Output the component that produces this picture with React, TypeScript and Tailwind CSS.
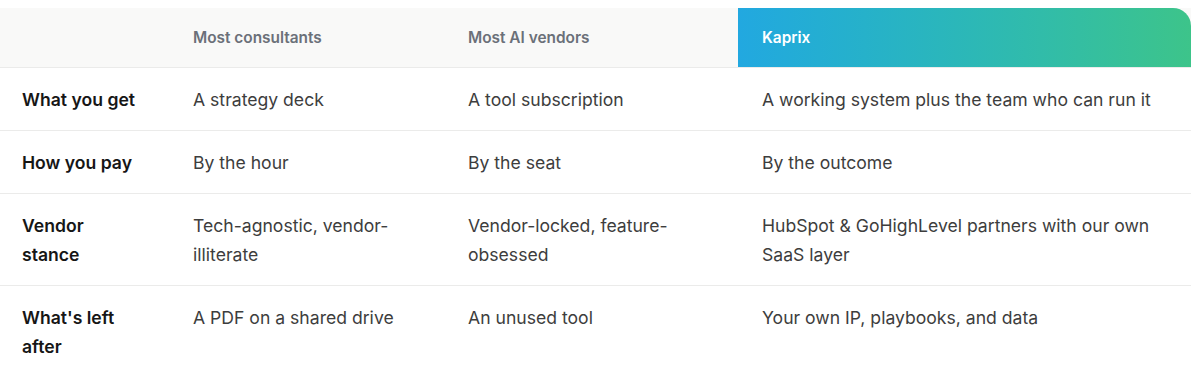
const columns = ["Most consultants", "Most AI vendors"];

const rows = [
  {
    label: "What you get",
    consultants: "A strategy deck",
    vendors: "A tool subscription",
    kaprix: "A working system plus the team who can run it",
  },
  {
    label: "How you pay",
    consultants: "By the hour",
    vendors: "By the seat",
    kaprix: "By the outcome",
  },
  {
    label: "Vendor stance",
    consultants: "Tech-agnostic, vendor-illiterate",
    vendors: "Vendor-locked, feature-obsessed",
    kaprix: "HubSpot & GoHighLevel partners with our own SaaS layer",
  },
  {
    label: "What's left after",
    consultants: "A PDF on a shared drive",
    vendors: "An unused tool",
    kaprix: "Your own IP, playbooks, and data",
  },
];

const grid = "grid grid-cols-[169px_275px_294px_453px]";

export default function App() {
  return (
    <div className="min-h-[381px] bg-white pt-2 font-['Inter','Liberation_Sans',sans-serif]">
      <div className="w-[1191px]">
        {/* header */}
        <div className={`${grid} h-[60px] border-b border-[#ebebea] bg-[#f9f9f8]`}>
          <div />
          {columns.map((col) => (
            <div
              key={col}
              className="flex items-center px-6 text-[15.4px] font-semibold text-[#6b7079]"
            >
              {col}
            </div>
          ))}
          <div className="flex items-center rounded-tr-[18px] bg-gradient-to-r from-[#22a8e0] to-[#3dc48a] px-6 text-[15.4px] font-semibold text-white">
            Kaprix
          </div>
        </div>

        {rows.map((row, i) => (
          <div
            key={row.label}
            className={`${grid} text-[17.6px] leading-[29px] ${
              i < rows.length - 1 ? "border-b border-[#ebebea]" : ""
            }`}
          >
            <div className="py-[16.5px] pl-[22px] pr-6 font-semibold text-[#161616]">
              {row.label}
            </div>
            <div className="px-6 py-[16.5px] text-[#3d3d3d]">{row.consultants}</div>
            <div className="px-6 py-[16.5px] text-[#3d3d3d]">{row.vendors}</div>
            <div className="px-6 py-[16.5px] text-[#3d3d3d]">{row.kaprix}</div>
          </div>
        ))}
      </div>
    </div>
  );
}
